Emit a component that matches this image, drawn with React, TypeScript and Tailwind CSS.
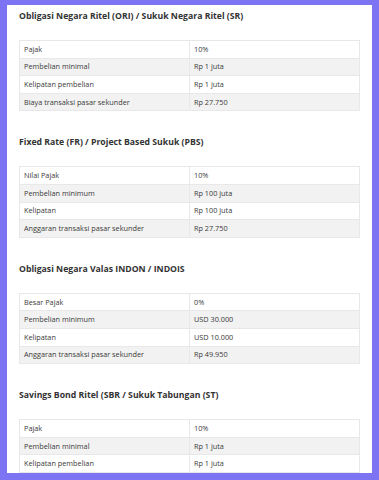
import React from "react";

type Row = [string, string];

const sections: { title: string; rows: Row[] }[] = [
  {
    title: "Obligasi Negara Ritel (ORI) / Sukuk Negara Ritel (SR)",
    rows: [
      ["Pajak", "10%"],
      ["Pembelian minimal", "Rp 1 juta"],
      ["Kelipatan pembelian", "Rp 1 juta"],
      ["Biaya transaksi pasar sekunder", "Rp 27.750"],
    ],
  },
  {
    title: "Fixed Rate (FR) / Project Based Sukuk (PBS)",
    rows: [
      ["Nilai Pajak", "10%"],
      ["Pembelian minimum", "Rp 100 juta"],
      ["Kelipatan", "Rp 100 juta"],
      ["Anggaran transaksi pasar sekunder", "Rp 27.750"],
    ],
  },
  {
    title: "Obligasi Negara Valas INDON / INDOIS",
    rows: [
      ["Besar Pajak", "0%"],
      ["Pembelian minimum", "USD 30.000"],
      ["Kelipatan", "USD 10.000"],
      ["Anggaran transaksi pasar sekunder", "Rp 49.950"],
    ],
  },
  {
    title: "Savings Bond Ritel (SBR / Sukuk Tabungan (ST)",
    rows: [
      ["Pajak", "10%"],
      ["Pembelian minimal", "Rp 1 juta"],
      ["Kelipatan pembelian", "Rp 1 juta"],
    ],
  },
];

const App = () => {
  return (
    <div className="h-[480px] w-[379px] overflow-hidden bg-[#7d74f3] pl-[7px] pr-[7px] pt-[5px] pb-[7px] font-['Open_Sans',sans-serif]">
      <div className="h-full overflow-hidden bg-white px-3 pt-[3px]">
        {sections.map((section, i) => (
          <section key={section.title} className={i > 0 ? "mt-[23px]" : ""}>
            <h2 className="h-[16px] text-[8.7px] font-bold leading-[16px] text-[#333]">
              {section.title}
            </h2>
            <table className="mt-[16px] w-full table-fixed border-collapse border border-[#e8e8e8] text-[7.3px] text-[#3a3a3a]">
              <tbody>
                {section.rows.map(([label, value], r) => (
                  <tr
                    key={label}
                    className={`h-[17.6px] ${r % 2 === 1 ? "bg-[#f2f2f2]" : "bg-white"}`}
                  >
                    <td className="border border-[#e8e8e8] px-[4px] py-0">{label}</td>
                    <td className="border border-[#e8e8e8] px-[4px] py-0">{value}</td>
                  </tr>
                ))}
              </tbody>
            </table>
          </section>
        ))}
      </div>
    </div>
  );
};

export default App;
